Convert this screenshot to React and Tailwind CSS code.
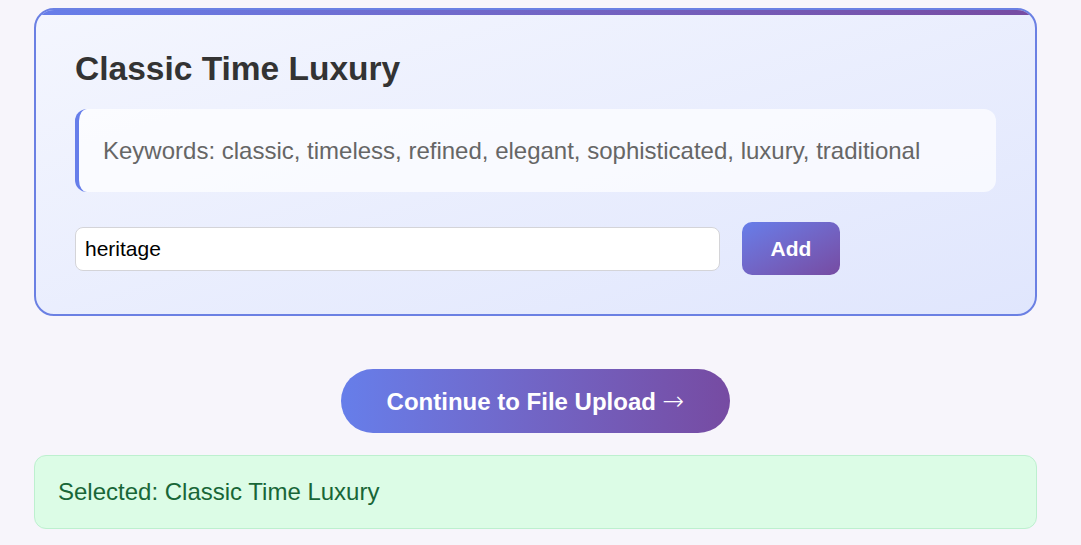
import React from "react";

export default function App() {
  return (
    <div className="min-h-[545px] w-full bg-[#f7f5fb] pt-[8px] pl-[34px]" style={{ fontFamily: '"Liberation Sans", Arial, sans-serif' }}>
      <div className="w-[1003px]">
        <div className="relative overflow-hidden rounded-[20px] border-2 border-[#6b80e3] bg-gradient-to-br from-[#f4f6fe] to-[#e0e6fd] px-[39px] pt-[40px] pb-[39px]">
          <div className="absolute left-0 right-0 top-0 h-[5px] bg-gradient-to-r from-[#667eea] to-[#764ba2]" />
          <h2 className="text-[33.5px] font-bold leading-[37px] text-[#333]">Classic Time Luxury</h2>
          <div className="mt-[22px] rounded-[12px] border-l-4 border-[#667eea] bg-white/70 py-[24px] pl-[24px] text-[24px] leading-[35px] text-[#666]">
            Keywords: classic, timeless, refined, elegant, sophisticated, luxury, traditional
          </div>
          <div className="mt-[30px] flex items-center gap-[22px]">
            <input
              defaultValue="heritage"
              className="h-[44px] w-[645px] rounded-[8px] border border-[#d4d4d8] bg-white px-[9px] text-[21px] text-black outline-none"
              style={{ fontFamily: '"Liberation Sans", Arial, sans-serif' }}
            />
            <button className="h-[53px] w-[98px] rounded-[10px] bg-gradient-to-br from-[#667eea] to-[#764ba2] text-[21px] font-bold text-white">
              Add
            </button>
          </div>
        </div>
        <div className="mt-[53px] flex justify-center">
          <button className="h-[64px] w-[389px] rounded-full bg-gradient-to-r from-[#667eea] to-[#764ba2] text-[24px] font-bold text-white">
            Continue to File Upload{" "}
            <span className="text-[26px] font-extralight" style={{ fontFamily: '"DejaVu Sans", sans-serif' }}>→</span>
          </button>
        </div>
        <div className="mt-[22px] flex h-[74px] items-center rounded-[12px] border border-[#bdf0cf] bg-[#dcfce6] px-[23px] text-[24px] text-[#186637]">
          Selected: Classic Time Luxury
        </div>
      </div>
    </div>
  );
}
